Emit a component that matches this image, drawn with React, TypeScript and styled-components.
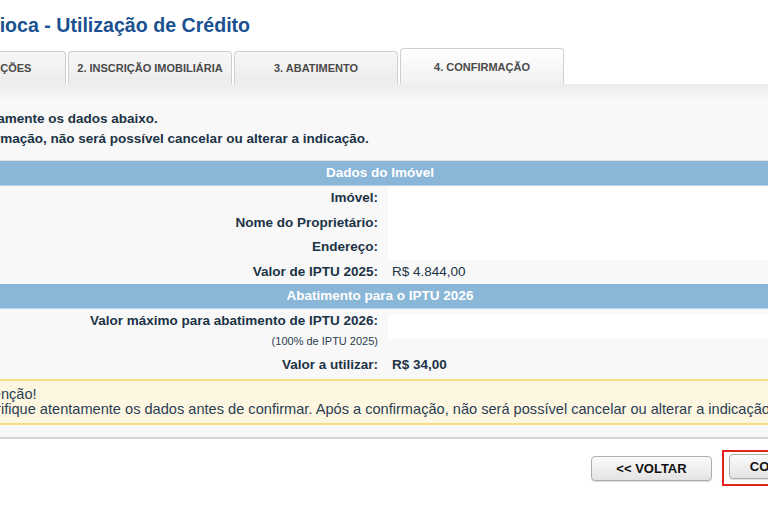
import React from "react";
import styled, { createGlobalStyle } from "styled-components";

const Global = createGlobalStyle`
  html, body { margin: 0; padding: 0; background: #fff; overflow: hidden; }
  body { font-family: "Liberation Sans", Arial, sans-serif; color: #1c3346; }
`;

const Page = styled.div`
  margin-left: -100px;
  width: 960px;
`;

const Title = styled.h1`
  margin: 0;
  padding: 14px 0 0 18px;
  font-size: 19.6px;
  line-height: 23px;
  font-weight: bold;
  color: #1a5190;
`;

const Tabs = styled.div`
  display: flex;
  align-items: flex-end;
  gap: 2px;
  padding-left: 2px;
  margin-top: 11px;
  height: 36px;
`;

const Tab = styled.div<{ $active?: boolean }>`
  box-sizing: border-box;
  width: 164px;
  height: ${(p) => (p.$active ? "36px" : "33px")};
  display: flex;
  align-items: center;
  justify-content: center;
  padding-bottom: ${(p) => (p.$active ? "0" : "1px")};
  border: 1px solid #cfcfcf;
  border-bottom: none;
  border-radius: 4px 4px 0 0;
  background: ${(p) =>
    p.$active
      ? "linear-gradient(#ffffff, #f1f1f1)"
      : "linear-gradient(#f7f7f7, #ececec)"};
  font-size: 11px;
  font-weight: bold;
  color: #4a4a4a;
  white-space: nowrap;
`;

const Panel = styled.div`
  background: linear-gradient(#ececec 0, #f8f8f8 16px, #f8f8f8 100%);
  border-bottom: 2px solid #d6d6d6;
  padding: 25px 0 12px;
`;

const Intro = styled.p`
  margin: 0 0 11px;
  padding-left: 14px;
  font-size: 13.5px;
  line-height: 20px;
  font-weight: bold;
  color: #1c3346;
`;

const Table = styled.div`
  display: grid;
  grid-template-columns: 484px 1fr;
  column-gap: 4px;
  border-top: 1px solid #e2e2e2;
`;

const Header = styled.div`
  grid-column: 1 / -1;
  background: #8ab6d8;
  color: #fff;
  font-size: 13.5px;
  font-weight: bold;
  text-align: center;
  line-height: 24px;
  height: 24px;
  border-bottom: 1px solid #b9d3e8;
`;

const Label = styled.div<{ $h?: number }>`
  height: ${(p) => p.$h ?? 24.5}px;
  box-sizing: border-box;
  padding: 4px 6px 0 0;
  text-align: right;
  font-size: 13.5px;
  line-height: 16px;
  font-weight: bold;
  color: #1c3346;
`;

const SubLabel = styled.div`
  font-size: 11px;
  font-weight: normal;
  line-height: 16px;
  margin-top: 4px;
  color: #2a3d4e;
`;

const Value = styled.div<{ $blank?: boolean; $bold?: boolean; $h?: number }>`
  height: ${(p) => p.$h ?? 24.5}px;
  box-sizing: border-box;
  padding: 4px 0 0 4px;
  background: ${(p) => (p.$blank ? "#fff" : "transparent")};
  font-size: 13.5px;
  line-height: 16px;
  font-weight: ${(p) => (p.$bold ? "bold" : "normal")};
  color: #1c3346;
`;

const BoxCell = styled.div`
  padding-top: 5px;
`;

const WhiteBox = styled.div`
  background: #fff;
  height: 25px;
`;

const Notice = styled.div`
  margin-top: 1px;
  background: #fdf7e1;
  border-top: 2px solid #f8dd82;
  border-bottom: 2px solid #f8dd82;
  padding: 6px 0 6px 79px;
  font-size: 14.6px;
  line-height: 15px;
  color: #2b3e52;
  white-space: nowrap;
`;

const Actions = styled.div`
  display: flex;
  justify-content: flex-end;
  align-items: center;
  gap: 10px;
  padding: 11px 3px 0 0;
`;

const Button = styled.button`
  width: 121px;
  height: 25px;
  box-sizing: border-box;
  border: 1px solid #adadad;
  border-radius: 4px;
  background: linear-gradient(#fbfbfb, #e3e3e3);
  box-shadow: 0 1px 1px rgba(0, 0, 0, 0.15);
  font-family: "Liberation Sans", Arial, sans-serif;
  font-size: 13px;
  font-weight: bold;
  color: #111;
  padding: 0;
`;

const Highlight = styled.span`
  display: inline-flex;
  border: 2px solid #e3241b;
  padding: 2px 5px 5px 5px;
`;

export default function App() {
  return (
    <>
      <Global />
      <Page>
        <Title>Nota Carioca - Utilização de Crédito</Title>
        <Tabs>
          <Tab>1. INFORMAÇÕES</Tab>
          <Tab>2. INSCRIÇÃO IMOBILIÁRIA</Tab>
          <Tab>3. ABATIMENTO</Tab>
          <Tab $active>4. CONFIRMAÇÃO</Tab>
        </Tabs>
        <Panel>
          <Intro>
            Confira atentamente os dados abaixo.
            <br />
            Após a confirmação, não será possível cancelar ou alterar a indicação.
          </Intro>
          <Table>
            <Header>Dados do Imóvel</Header>
            <Label>Imóvel:</Label>
            <Value $blank />
            <Label>Nome do Proprietário:</Label>
            <Value $blank />
            <Label>Endereço:</Label>
            <Value $blank />
            <Label>Valor de IPTU 2025:</Label>
            <Value>R$ 4.844,00</Value>
            <Header>Abatimento para o IPTU 2026</Header>
            <Label $h={44}>
              Valor máximo para abatimento de IPTU 2026:
              <SubLabel>(100% de IPTU 2025)</SubLabel>
            </Label>
            <BoxCell>
              <WhiteBox />
            </BoxCell>
            <Label $h={25}>Valor a utilizar:</Label>
            <Value $bold $h={25}>R$ 34,00</Value>
          </Table>
          <Notice>
            Atenção!
            <br />
            Verifique atentamente os dados antes de confirmar. Após a confirmação, não será possível cancelar ou alterar a indicação.
          </Notice>
        </Panel>
        <Actions>
          <Button>&lt;&lt; VOLTAR</Button>
          <Highlight>
            <Button>CONFIRMAR</Button>
          </Highlight>
        </Actions>
      </Page>
    </>
  );
}
